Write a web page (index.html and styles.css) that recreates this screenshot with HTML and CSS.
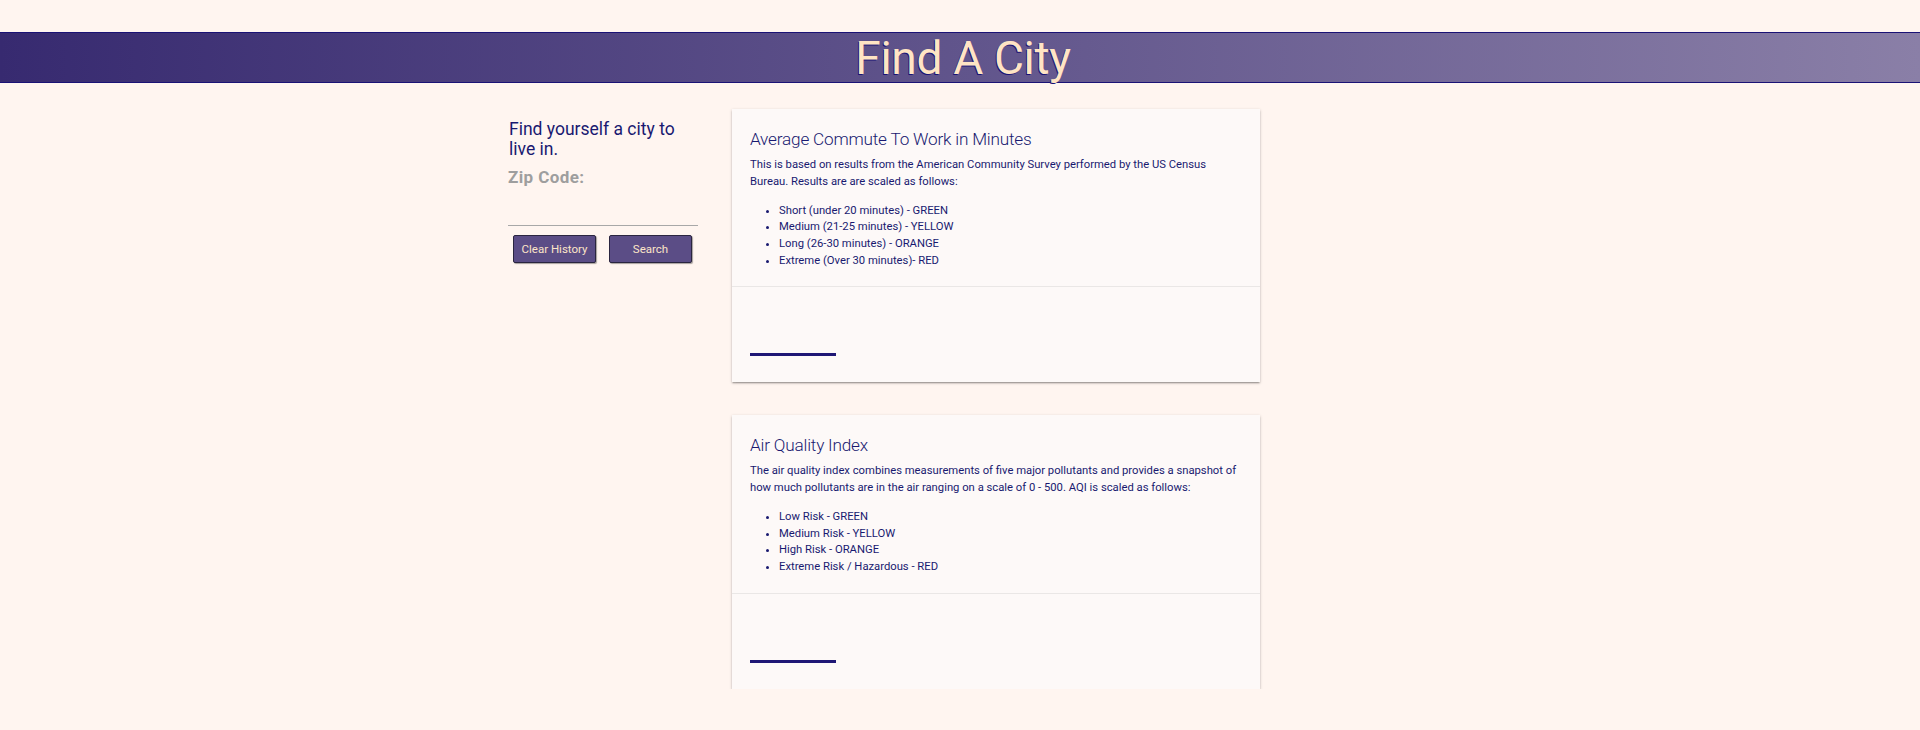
FILE: index.html
```html
<!DOCTYPE html>
<html lang="en">
<head>
<meta charset="utf-8">
<title>Find A City</title>
<link rel="stylesheet" href="styles.css">
</head>
<body>
<header class="banner">
  <h1 class="banner-title">Find A City</h1>
</header>
<main class="layout">
  <aside class="sidebar">
    <h2 class="tagline">Find yourself a city to live in.</h2>
    <label class="zip-label" for="zip">Zip Code:</label>
    <input class="zip-input" id="zip" type="text">
    <div class="actions">
      <button class="btn">Clear History</button>
      <button class="btn">Search</button>
    </div>
  </aside>
  <section class="cards">
    <article class="card">
      <div class="card-content">
        <h3 class="card-title">Average Commute To Work in Minutes</h3>
        <p>This is based on results from the American Community Survey performed by the US Census Bureau. Results are are scaled as follows:</p>
        <ul class="scale">
          <li>Short (under 20 minutes) - GREEN</li>
          <li>Medium (21-25 minutes) - YELLOW</li>
          <li>Long (26-30 minutes) - ORANGE</li>
          <li>Extreme (Over 30 minutes)- RED</li>
        </ul>
      </div>
      <div class="card-action"><div class="bar"></div></div>
    </article>
    <article class="card">
      <div class="card-content">
        <h3 class="card-title">Air Quality Index</h3>
        <p>The air quality index combines measurements of five major pollutants and provides a snapshot of how much pollutants are in the air ranging on a scale of 0 - 500. AQI is scaled as follows:</p>
        <ul class="scale">
          <li>Low Risk - GREEN</li>
          <li>Medium Risk - YELLOW</li>
          <li>High Risk - ORANGE</li>
          <li>Extreme Risk / Hazardous - RED</li>
        </ul>
      </div>
      <div class="card-action"><div class="bar"></div></div>
    </article>
  </section>
</main>
</body>
</html>
```
FILE: styles.css
```css
* { box-sizing: border-box; }
html, body {
  margin: 0;
  padding: 0;
  background: #fff5f0;
  font-family: Roboto, "Noto Sans", "Liberation Sans", sans-serif;
  color: #191970;
}
.banner {
  margin-top: 32px;
  height: 51px;
  border-top: 1px solid #1a1275;
  border-bottom: 1px solid #1a1275;
  background: linear-gradient(to right, #372a70, #8a7fa7);
  display: flex;
  align-items: center;
  justify-content: center;
}
.banner-title {
  margin: 0 0 0 6px;
  padding-top: 2px;
  font-size: 46px;
  font-weight: 400;
  line-height: 49px;
  color: #ffe4c4;
  text-shadow: -1px 1px 0 #1a1275;
  letter-spacing: -0.3px;
}
.layout {
  display: flex;
  padding-left: 508px;
  padding-top: 25px;
  gap: 34px;
}
.sidebar {
  width: 190px;
  display: flex;
  flex-direction: column;
}
.tagline {
  margin: 12px 0 0 1px;
  font-size: 17.5px;
  font-weight: 400;
  line-height: 19.5px;
  color: #191970;
}
.zip-label {
  margin-top: 8px;
  font-size: 17px;
  font-weight: 700;
  color: #9e9e9e;
  line-height: 20px;
  letter-spacing: 0.4px;
}
.zip-input {
  margin-top: 18px;
  height: 21px;
  border: none;
  border-bottom: 1px solid #a8a8a8;
  background: transparent;
  outline: none;
  padding: 0;
}
.actions {
  display: flex;
  gap: 13px;
  padding-left: 5px;
  margin-top: 9px;
}
.btn {
  width: 83px;
  height: 28px;
  padding: 0;
  background: #5b4d86;
  color: #fde5c8;
  font-family: Roboto, "Liberation Sans", Arial, sans-serif;
  font-size: 11.5px;
  border: 1px solid #2a2540;
  border-radius: 2px;
  box-shadow: 1px 1px 1px rgba(0,0,0,0.35);
}
.cards {
  width: 528px;
  display: flex;
  flex-direction: column;
  gap: 33px;
  padding-top: 1px;
}
.card {
  background: #fdf9f8;
  box-shadow: 0 1.5px 1.5px 0 rgba(0,0,0,0.14), 0 2px 1px -1px rgba(0,0,0,0.12), 0 1px 3px 0 rgba(0,0,0,0.2);
}
.card-content {
  padding: 18px 18px 17px;
}
.card-title {
  margin: 0 0 6px;
  font-size: 17.2px;
  font-weight: 300;
  line-height: 24px;
  color: #191970;
  letter-spacing: -0.2px;
}
.card-content p {
  margin: 0;
  font-size: 11.25px;
  line-height: 16.8px;
}
.scale {
  margin: 12px 0 0;
  padding-left: 29px;
  font-size: 11.25px;
  line-height: 16.7px;
}
.card-action {
  border-top: 1px solid rgba(160,160,160,0.2);
  padding: 66px 18px 26px;
}
.bar {
  width: 86px;
  height: 3px;
  background: #1f1775;
}
```
